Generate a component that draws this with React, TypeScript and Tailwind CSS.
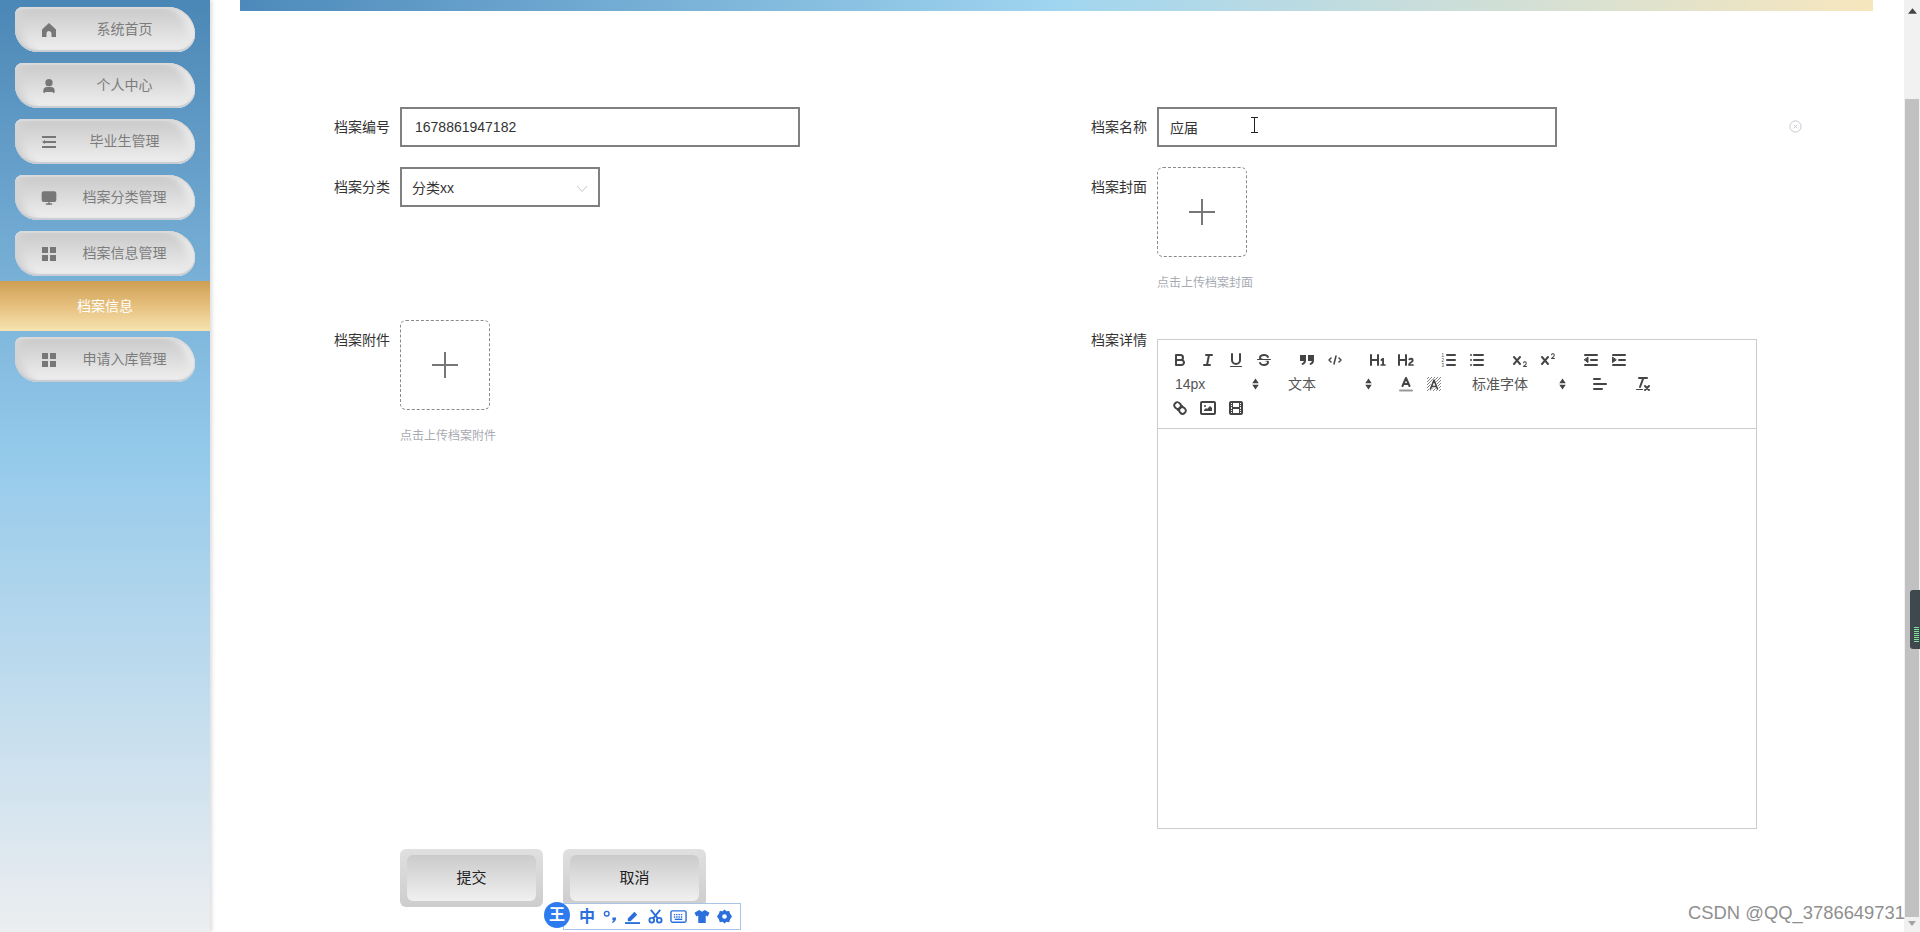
import React from "react";
import { User, Monitor } from "lucide-react";

const S = ({ children }: { children: React.ReactNode }) => (
  <span className="flex h-6 w-7 items-center justify-center">
    <svg viewBox="0 0 18 18" className="h-[18px] w-[18px]" fill="none" stroke="#444" strokeWidth="2" strokeLinecap="round" strokeLinejoin="round">
      {children}
    </svg>
  </span>
);
const P = ({ d }: { d: string }) => <path d={d} fill="#444" stroke="none" />;

const Bold = () => (
  <S>
    <path d="M5,4H9.5A2.5,2.5,0,0,1,12,6.5v0A2.5,2.5,0,0,1,9.5,9H5A0,0,0,0,1,5,9V4A0,0,0,0,1,5,4Z" />
    <path d="M5,9h5.5A2.5,2.5,0,0,1,13,11.5v0A2.5,2.5,0,0,1,10.5,14H5a0,0,0,0,1,0,0V9A0,0,0,0,1,5,9Z" />
  </S>
);
const Italic = () => (
  <S>
    <path d="M7 4H13M5 14H11M8 14L10 4" />
  </S>
);
const Underline = () => (
  <S>
    <path d="M5,3V9a4.012,4.012,0,0,0,4,4H9a4.012,4.012,0,0,0,4-4V3" />
    <rect x="3" y="15" width="12" height="1" rx=".5" fill="#444" stroke="none" />
  </S>
);
const Strike = () => (
  <S>
    <path d="M15.5 8.5H2.5" strokeWidth="1" />
    <P d="M9.007,8C6.542,7.791,6,7.519,6,6.5,6,5.792,7.283,5,9,5c1.571,0,2.765.679,2.969,1.309a1,1,0,0,0,1.9-.617C13.356,4.106,11.354,3,9,3,6.2,3,4,4.538,4,6.5a3.2,3.2,0,0,0,.5,1.843Z" />
    <P d="M8.984,10C11.457,10.208,12,10.479,12,11.5c0,.708-1.283,1.5-3,1.5-1.571,0-2.765-.679-2.969-1.309a1,1,0,1,0-1.9.617C4.644,13.894,6.646,15,9,15c2.8,0,5-1.538,5-3.5a3.2,3.2,0,0,0-.5-1.843Z" />
  </S>
);
const Quote = () => (
  <S>
    <P d="M2 4h6v5.500c0 2.500-1.500 4-4 4.500l-.5-1.500C5 12 5.700 11 5.800 10H2Z" />
    <P d="M10 4h6v5.500c0 2.500-1.500 4-4 4.500l-.5-1.500C13 12 13.700 11 13.800 10H10Z" />
  </S>
);
const Code = () => (
  <S>
    <path d="M5 7L3 9L5 11M13 7L15 9L13 11M10 5L8 13" strokeWidth="1.500" />
  </S>
);
const H1 = () => (
  <S>
    <P d="M10,4V14a1,1,0,0,1-2,0V10H3v4a1,1,0,0,1-2,0V4A1,1,0,0,1,3,4V8H8V4a1,1,0,0,1,2,0Zm6.06787,9.209H14.98975V7.59863a.54085.54085,0,0,0-.605-.60547h-.62744a1.01119,1.01119,0,0,0-.748.29688L11.645,8.56641a.5435.5435,0,0,0-.022.8584l.28613.30762a.53861.53861,0,0,0,.84717.0332l.09912-.08789a1.2137,1.2137,0,0,0,.2417-.35254h.02246s-.01123.30859-.01123.60547V13.209H12.041a.54085.54085,0,0,0-.605.60547v.43945a.54085.54085,0,0,0,.605.60547h4.02686a.54085.54085,0,0,0,.605-.60547v-.43945A.54085.54085,0,0,0,16.06787,13.209Z" />
  </S>
);
const H2 = () => (
  <S>
    <P d="M16.73975,13.81445v.43945a.54085.54085,0,0,1-.605.60547H11.855a.58392.58392,0,0,1-.64893-.60547V14.0127c0-2.90527,3.39941-3.42187,3.39941-4.55469a.77675.77675,0,0,0-.84717-.78125,1.17684,1.17684,0,0,0-.83594.38477c-.2749.26367-.561.374-.85791.13184l-.4292-.34082c-.30811-.24219-.38525-.51758-.1543-.81445a2.97155,2.97155,0,0,1,2.45361-1.17676,2.45393,2.45393,0,0,1,2.68408,2.40918c0,2.45312-3.1792,2.92676-3.27832,3.93848h2.79443A.54085.54085,0,0,1,16.73975,13.81445ZM9,3A.99974.99974,0,0,0,8,4V8H3V4A1,1,0,0,0,1,4V14a1,1,0,0,0,2,0V10H8v4a1,1,0,0,0,2,0V4A.99974.99974,0,0,0,9,3Z" />
  </S>
);
const Ol = () => (
  <S>
    <path d="M7 4H15M7 9H15M7 14H15" />
    <text x="1.500" y="6" fontSize="4.500" fill="#444" stroke="none" fontFamily="Liberation Sans">1</text>
    <text x="1.500" y="11" fontSize="4.500" fill="#444" stroke="none" fontFamily="Liberation Sans">2</text>
    <text x="1.500" y="16" fontSize="4.500" fill="#444" stroke="none" fontFamily="Liberation Sans">3</text>
  </S>
);
const Ul = () => (
  <S>
    <path d="M6 4H15M6 9H15M6 14H15M3 4H3M3 9H3M3 14H3" />
  </S>
);
const Sub = () => (
  <S>
    <P d="M15.5,15H13.861a3.858,3.858,0,0,0,1.914-2.975,1.8,1.8,0,0,0-1.6-1.751A1.921,1.921,0,0,0,12.021,11.7a0.50013,0.50013,0,1,0,.957.291h0a0.914,0.914,0,0,1,1.053-.725,0.81,0.81,0,0,1,.744.762c0,1.076-1.16971,1.86982-1.93971,2.43082A1.45639,1.45639,0,0,0,12,15.5a0.5,0.5,0,0,0,.5.5h3A0.5,0.5,0,0,0,15.5,15Z" />
    <P d="M9.65,5.241a1,1,0,0,0-1.409.108L6,7.964,3.759,5.349A1,1,0,0,0,2.192,6.59178Q2.21541,6.6213,2.241,6.649L4.684,9.5,2.241,12.35A1,1,0,0,0,3.71,13.70722q0.02557-.02768.049-0.05722L6,11.036,8.241,13.65a1,1,0,1,0,1.567-1.24277Q9.78459,12.3777,9.759,12.35L7.316,9.5,9.759,6.651A1,1,0,0,0,9.65,5.241Z" />
  </S>
);
const Sup = () => (
  <S>
    <P d="M15.5,7H13.861a4.015,4.015,0,0,0,1.914-2.975,1.8,1.8,0,0,0-1.6-1.751A1.922,1.922,0,0,0,12.021,3.7a0.5,0.5,0,1,0,.957.291,0.917,0.917,0,0,1,1.053-.725,0.81,0.81,0,0,1,.744.762c0,1.077-1.164,1.925-1.934,2.486A1.423,1.423,0,0,0,12,7.5a0.5,0.5,0,0,0,.5.5h3A0.5,0.5,0,0,0,15.5,7Z" />
    <P d="M9.651,5.241a1,1,0,0,0-1.41.108L6,7.964,3.759,5.349a1,1,0,1,0-1.519,1.3L4.683,9.5,2.241,12.35a1,1,0,1,0,1.519,1.3L6,11.036l2.241,2.615a1,1,0,0,0,1.519-1.3L7.317,9.5,9.759,6.651A1,1,0,0,0,9.651,5.241Z" />
  </S>
);
const Outdent = () => (
  <S>
    <path d="M3 14H15M3 4H15M9 9H15" />
    <polygon points="6 6.500 6 11.500 2.500 9" fill="#444" strokeWidth="1" />
  </S>
);
const Indent = () => (
  <S>
    <path d="M3 14H15M3 4H15M9 9H15" />
    <polygon points="2.500 6.500 2.500 11.500 6 9" fill="#444" strokeWidth="1" />
  </S>
);
const Color = () => (
  <S>
    <path d="M3 15.500H15" stroke="#999" />
    <path d="M5.500 11L9 3L12.500 11M11.630 9H6.380" strokeWidth="2" />
  </S>
);
const Background = () => (
  <S>
    <path d="M2 4L4 2M2 7L7 2M2 10L10 2M2 13L13 2M2 16L16 2M5 16L16 5M8 16L16 8M11 16L16 11M14 16L16 14" stroke="#666" strokeWidth=".8" strokeLinecap="butt" />
    <path d="M5.500 14L9 5L12.500 14M11.630 11.500H6.380" stroke="#fff" strokeWidth="3" />
    <path d="M5.500 14L9 5L12.500 14M11.630 11.500H6.380" strokeWidth="1.600" />
  </S>
);
const Align = () => (
  <S>
    <path d="M3 4H9M3 9H15M3 14H11" />
  </S>
);
const Clean = () => (
  <S>
    <path d="M5 3H13M6 12L9.350 3M11 11L15 15M15 11L11 15" />
    <rect x="2" y="14" width="7" height="1" rx=".5" fill="#444" stroke="none" />
  </S>
);
const LinkI = () => (
  <S>
    <path d="M7 11L11 7" />
    <path d="M8.900,4.577a3.476,3.476,0,0,1,.36,4.679A3.476,3.476,0,0,1,4.577,8.900C3.185,7.500,2.035,6.400,4.217,4.217S7.500,3.185,8.900,4.577Z" />
    <path d="M13.423,9.100a3.476,3.476,0,0,0-4.679-.36,3.476,3.476,0,0,0,.36,4.679c1.392,1.392,2.500,2.542,4.679.36S14.815,10.500,13.423,9.100Z" />
  </S>
);
const ImageI = () => (
  <S>
    <rect x="2" y="3" width="14" height="12" rx="1" />
    <circle cx="6" cy="7" r="1" fill="#444" stroke="none" />
    <polygon points="5 12 5 11 7 9 8 10 11 7 13 9 13 12" fill="#444" stroke="none" />
  </S>
);
const Video = () => (
  <S>
    <rect x="3" y="3" width="12" height="12" rx="1" />
    <P d="M5 3h1v12H5ZM12 3h1v12h-1ZM5 8h8v2H5ZM3 5h3v1H3ZM3 7h3v1H3ZM3 10h3v1H3ZM3 12h3v1H3ZM12 5h3v1h-3ZM12 7h3v1h-3ZM12 10h3v1h-3ZM12 12h3v1h-3Z" />
  </S>
);

const Picker = ({ label, w }: { label: string; w: string }) => (
  <span className={`flex h-6 items-center justify-between pl-[9px] pr-[5px] text-[14px] text-[#555] ${w}`}>
    <span>{label}</span>
    <svg viewBox="0 0 8 14" className="h-[12px] w-[7px]" fill="#444">
      <path d="M4 .5L7.800 6H.2ZM4 13.500L.2 8H7.800Z" />
    </svg>
  </span>
);

const HomeI = () => (
  <svg viewBox="0 0 14 14" className="h-[14px] w-[14px]" fill="#777">
    <path d="M7 0L14 6.500V14H9.500V10.500A2.500 2.500 0 0 0 4.500 10.500V14H0V6.500Z" />
  </svg>
);
const Grid4 = () => (
  <svg viewBox="0 0 14 14" className="h-[14px] w-[14px]" fill="#777">
    <rect x="0" y="0" width="6" height="6" />
    <rect x="8" y="0" width="6" height="6" />
    <rect x="0" y="8" width="6" height="6" />
    <rect x="8" y="8" width="6" height="6" />
  </svg>
);
const ListI = () => (
  <svg viewBox="0 0 14 14" className="h-[14px] w-[14px]" fill="#777">
    <rect x="0" y="1" width="14" height="2" />
    <rect x="3" y="6" width="11" height="2" />
    <rect x="0" y="11" width="14" height="2" />
    <path d="M0 7L3 5V9Z" />
  </svg>
);

const menu: { t: string; i: React.ReactNode }[] = [
  { t: "系统首页", i: <HomeI /> },
  { t: "个人中心", i: <User size={16} fill="#777" stroke="#777" strokeWidth={3} /> },
  { t: "毕业生管理", i: <ListI /> },
  { t: "档案分类管理", i: <Monitor size={16} fill="#777" stroke="#777" /> },
  { t: "档案信息管理", i: <Grid4 /> },
];

const Item = ({ t, i }: { t: string; i: React.ReactNode }) => (
  <div className="mx-[15px] flex h-[45px] w-[180px] items-center rounded-tl-[10px] rounded-tr-[36px] rounded-br-[24px] rounded-bl-[30px] bg-gradient-to-b from-[#c9c9c9] via-[#dedede] via-55% to-[#f0f0f0] pl-[26px] pr-[3px] text-[14px] text-[#7c7c7c] shadow-[inset_0_-2px_1px_#c7ccd4,inset_0_2px_1px_#dadada,inset_9px_0_6px_-2px_#d4d4d4,inset_-10px_0_6px_-2px_#e8e8e8]">
    <span className="flex w-4 justify-center">{i}</span>
    <span className="flex-1 text-center">{t}</span>
  </div>
);

const Label = ({ t }: { t: string }) => <div className="mr-[10px] h-10 w-14 shrink-0 whitespace-nowrap text-[14px] leading-10 text-[#333]">{t}</div>;

const Upload = ({ hint }: { hint: string }) => (
  <div className="flex flex-col">
    <div className="flex h-[90px] w-[90px] items-center justify-center rounded-[6px] border border-dashed border-[#8a8a8a]">
      <svg viewBox="0 0 28 28" className="h-7 w-7" stroke="#777" strokeWidth="2" fill="none">
        <path d="M14 1V27M1 14H27" />
      </svg>
    </div>
    <div className="mt-[17px] whitespace-nowrap text-[12px] leading-[18px] text-[#a8abb2]">{hint}</div>
  </div>
);

const Btn = ({ t }: { t: string }) => (
  <div className="flex h-[58px] w-[143px] rounded-[6px] bg-gradient-to-b from-[#e0e0e0] to-[#cdcdcd] px-[7px] pb-[6px] pt-[6px]">
    <div className="flex flex-1 items-center justify-center rounded-[6px] bg-gradient-to-b from-[#cbcbcb] to-[#f0f0f0] text-[15px] text-[#222]">{t}</div>
  </div>
);

export default function App() {
  return (
    <div className="relative flex h-[932px] w-[1920px] overflow-hidden bg-white font-['Liberation_Sans','Noto_Sans_CJK_SC',sans-serif]">
      <aside className="h-full w-[210px] shrink-0 bg-gradient-to-b from-[#4b87b6] via-[#93c9ea] via-48% to-[#eceef0] pt-[7px] shadow-[2px_0_4px_rgba(0,0,0,0.14)]">
        <div className="flex flex-col gap-[11px]">
          {menu.map((m) => (
            <Item key={m.t} t={m.t} i={m.i} />
          ))}
        </div>
        <div className="mt-[5px] mb-[6px] flex h-[50px] items-center justify-center bg-gradient-to-b from-[#cf9f52] via-[#e6c07e] to-[#f7e3b0] text-[14px] text-white">档案信息</div>
        <Item t="申请入库管理" i={<Grid4 />} />
      </aside>

      <main className="min-w-0 flex-1">
        <div className="ml-[30px] h-[11px] w-[1633px] bg-gradient-to-r from-[#4d8abb] via-[#a0d5f0] to-[#f7e6bd]" />
        <div className="mt-[96px] pl-[124px]">
          <div className="grid grid-cols-[757px_757px]">
            <div className="mb-5 flex">
              <Label t="档案编号" />
              <input readOnly value="1678861947182" className="h-10 w-[400px] border-2 border-[#808080] px-[13px] text-[14px] text-[#333] outline-none" />
            </div>
            <div className="mb-5 flex">
              <Label t="档案名称" />
              <input readOnly value="应届" className="h-10 w-[400px] border-2 border-[#808080] px-[11px] text-[14px] text-[#333] outline-none" />
            </div>

            <div className="mb-[28px] flex">
              <Label t="档案分类" />
              <div className="flex h-10 w-[200px] items-center justify-between border-2 border-[#808080] pl-[10px] pr-[10px] pt-[3px] text-[14px] text-[#333]">
                <span>分类xx</span>
                <svg viewBox="0 0 12 8" className="h-2 w-3" fill="none" stroke="#c4c7cc" strokeWidth="1">
                  <path d="M1 1L6 6.500L11 1" />
                </svg>
              </div>
            </div>
            <div className="mb-[28px] flex">
              <Label t="档案封面" />
              <Upload hint="点击上传档案封面" />
            </div>

            <div className="flex">
              <Label t="档案附件" />
              <Upload hint="点击上传档案附件" />
            </div>
            <div className="flex">
              <Label t="档案详情" />
              <div className="mt-[19px] flex h-[490px] w-[600px] flex-col border border-[#cccccc]">
                <div className="flex flex-col border-b border-[#cccccc] p-2">
                  <div className="flex h-6 gap-[15px]">
                    <div className="flex">
                      <Bold />
                      <Italic />
                      <Underline />
                      <Strike />
                    </div>
                    <div className="flex">
                      <Quote />
                      <Code />
                    </div>
                    <div className="flex">
                      <H1 />
                      <H2 />
                    </div>
                    <div className="flex">
                      <Ol />
                      <Ul />
                    </div>
                    <div className="flex">
                      <Sub />
                      <Sup />
                    </div>
                    <div className="flex">
                      <Outdent />
                      <Indent />
                    </div>
                  </div>
                  <div className="flex h-6 gap-[15px]">
                    <Picker label="14px" w="w-[98px]" />
                    <Picker label="文本" w="w-[98px]" />
                    <div className="flex">
                      <Color />
                      <Background />
                    </div>
                    <Picker label="标准字体" w="w-[108px]" />
                    <Align />
                    <Clean />
                  </div>
                  <div className="flex h-6">
                    <LinkI />
                    <ImageI />
                    <Video />
                  </div>
                </div>
              </div>
            </div>
          </div>
          <div className="mt-5 ml-[66px] flex gap-5">
            <Btn t="提交" />
            <Btn t="取消" />
          </div>
        </div>
      </main>

      {/* clear icon */}
      <svg viewBox="0 0 14 14" className="absolute left-[1789px] top-[120px] h-[13px] w-[13px]" fill="none" stroke="#c0c4cc" strokeWidth="1">
        <circle cx="7" cy="7" r="6" />
        <path d="M5 5L9 9M9 5L5 9" />
      </svg>

      {/* text cursor */}
      <svg viewBox="0 0 9 16" className="absolute left-[1250px] top-[117px] h-4 w-[9px]" fill="none" stroke="#222" strokeWidth="1">
        <path d="M1 .5H8M1 15.500H8M4.500 .5V15.500" />
      </svg>

      {/* browser scrollbar */}
      <div className="absolute right-0 top-0 flex h-full w-4 flex-col items-center bg-[#f1f1f1]">
        <svg viewBox="0 0 10 6" className="mt-[8px] h-[6px] w-[9px]" fill="#444">
          <path d="M5 0L10 6H0Z" />
        </svg>
        <div className="mt-[85px] h-[818px] w-[14px] bg-[#c1c1c1]" />
        <svg viewBox="0 0 10 6" className="mt-[4px] h-[5px] w-[8px]" fill="#a3a3a3">
          <path d="M0 0H10L5 6Z" />
        </svg>
      </div>

      {/* side widget */}
      <div className="absolute right-0 top-[590px] flex h-[59px] w-[10px] flex-col justify-end gap-[1px] rounded-l-[3px] bg-[#3f484d] pb-[7px] pl-[4px]">
        {[0, 1, 2, 3, 4, 5, 6, 7].map((k) => (
          <span key={k} className="h-[1px] w-[5px] bg-[#7fe09a]" />
        ))}
      </div>

      {/* watermark */}
      <div className="absolute left-[1688px] top-[901px] whitespace-nowrap text-[18.400px] leading-[24px] text-[#8f8f8f]">CSDN @QQ_3786649731</div>

      {/* IME bar */}
      <div className="absolute left-[563px] top-[903px] flex h-[27px] w-[178px] items-center border border-[#a9c3ea] bg-white pl-[15px] text-[#2a6fdb]">
        <span className="w-[24px] text-[16px] font-bold leading-none">中</span>
        <svg viewBox="0 0 16 16" className="mr-[7px] h-[15px] w-[15px]" fill="#2a6fdb">
          <circle cx="4" cy="5" r="2.500" fill="none" stroke="#2a6fdb" strokeWidth="1.500" />
          <path d="M10 9h4c0 3-1.500 5-4 6l-.5-1c1-.5 1.500-1.200 1.700-2H10Z" />
        </svg>
        <svg viewBox="0 0 16 16" className="mr-[8px] h-[15px] w-[15px]" fill="#2a6fdb">
          <path d="M3 10L10 3L13 6L6 13H3Z" />
          <rect x="0" y="14" width="16" height="2" />
        </svg>
        <svg viewBox="0 0 16 16" className="mr-[7px] h-[15px] w-[15px]" fill="none" stroke="#2a6fdb" strokeWidth="2">
          <circle cx="4" cy="12" r="2.500" />
          <circle cx="12" cy="12" r="2.500" />
          <path d="M5.500 10L13 1M10.500 10L3 1" />
        </svg>
        <svg viewBox="0 0 18 14" className="mr-[7px] h-[15px] w-[17px]" fill="none" stroke="#2a6fdb" strokeWidth="1.500">
          <rect x="1" y="1" width="16" height="12" rx="1.500" />
          <path d="M4 5H14M4 7.500H14" strokeDasharray="1.500 1" />
          <path d="M5 10H13" />
        </svg>
        <svg viewBox="0 0 16 16" className="mr-[7px] h-[15px] w-[16px]" fill="#2a6fdb">
          <path d="M5 1L8 3L11 1L16 4L14 8L12 7V15H4V7L2 8L0 4Z" />
        </svg>
        <svg viewBox="0 0 16 16" className="h-[15px] w-[15px]" fill="#2a6fdb">
          <path fillRule="evenodd" d="M8 .5L10 2.500L13 2L14 5L16 8L14 11L13 14L10 13.500L8 15.500L6 13.500L3 14L2 11L0 8L2 5L3 2L6 2.500ZM8 5.500A2.500 2.500 0 1 0 8 10.500A2.500 2.500 0 1 0 8 5.500Z" />
        </svg>
      </div>
      <div className="absolute left-[544px] top-[902px] flex h-[26px] w-[26px] items-center justify-center rounded-full bg-[#2e7bf0] text-[16px] font-bold leading-none text-white">
        王
        <span className="absolute bottom-[-3px] left-[12px] -z-10 h-[7px] w-[7px] rotate-45 bg-[#2e7bf0]" />
      </div>
    </div>
  );
}
